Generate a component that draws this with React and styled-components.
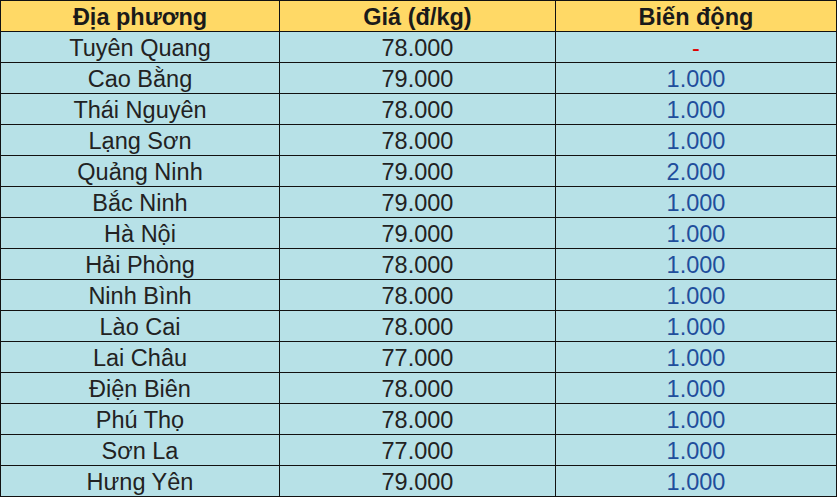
import React from "react";
import styled, { createGlobalStyle } from "styled-components";

const GlobalStyle = createGlobalStyle`
  body {
    margin: 0;
    background: #ffffff;
    font-family: "Liberation Sans", Arial, sans-serif;
  }
`;

const Table = styled.table`
  width: 836px;
  border-collapse: collapse;
  table-layout: fixed;
  font-family: "Liberation Sans", Arial, sans-serif;
  font-size: 23.5px;

  th,
  td {
    border: 1px solid #111;
    height: 24px;
    padding: 4px 0 2px;
    text-align: center;
    vertical-align: middle;
    line-height: 24px;
    white-space: nowrap;
    overflow: hidden;
  }
`;

const HeadCell = styled.th`
  background: #ffd966;
  color: #1a1a1a;
  font-weight: bold;
`;

const Cell = styled.td`
  background: #b7e1e7;
  color: ${(p) => (p.$tone === "up" ? "#1f4e9c" : p.$tone === "none" ? "#e00000" : "#222222")};
`;

const rows = [
  ["Tuyên Quang", "78.000", "-"],
  ["Cao Bằng", "79.000", "1.000"],
  ["Thái Nguyên", "78.000", "1.000"],
  ["Lạng Sơn", "78.000", "1.000"],
  ["Quảng Ninh", "79.000", "2.000"],
  ["Bắc Ninh", "79.000", "1.000"],
  ["Hà Nội", "79.000", "1.000"],
  ["Hải Phòng", "78.000", "1.000"],
  ["Ninh Bình", "78.000", "1.000"],
  ["Lào Cai", "78.000", "1.000"],
  ["Lai Châu", "77.000", "1.000"],
  ["Điện Biên", "78.000", "1.000"],
  ["Phú Thọ", "78.000", "1.000"],
  ["Sơn La", "77.000", "1.000"],
  ["Hưng Yên", "79.000", "1.000"],
];

export default function App() {
  return (
    <>
      <GlobalStyle />
      <Table>
        <colgroup>
          <col style={{ width: 279 }} />
          <col style={{ width: 276 }} />
          <col style={{ width: 281 }} />
        </colgroup>
        <thead>
          <tr>
            <HeadCell>Địa phương</HeadCell>
            <HeadCell>Giá (đ/kg)</HeadCell>
            <HeadCell>Biến động</HeadCell>
          </tr>
        </thead>
        <tbody>
          {rows.map(([place, price, change]) => (
            <tr key={place}>
              <Cell>{place}</Cell>
              <Cell>{price}</Cell>
              <Cell $tone={change === "-" ? "none" : "up"}>{change}</Cell>
            </tr>
          ))}
        </tbody>
      </Table>
    </>
  );
}
